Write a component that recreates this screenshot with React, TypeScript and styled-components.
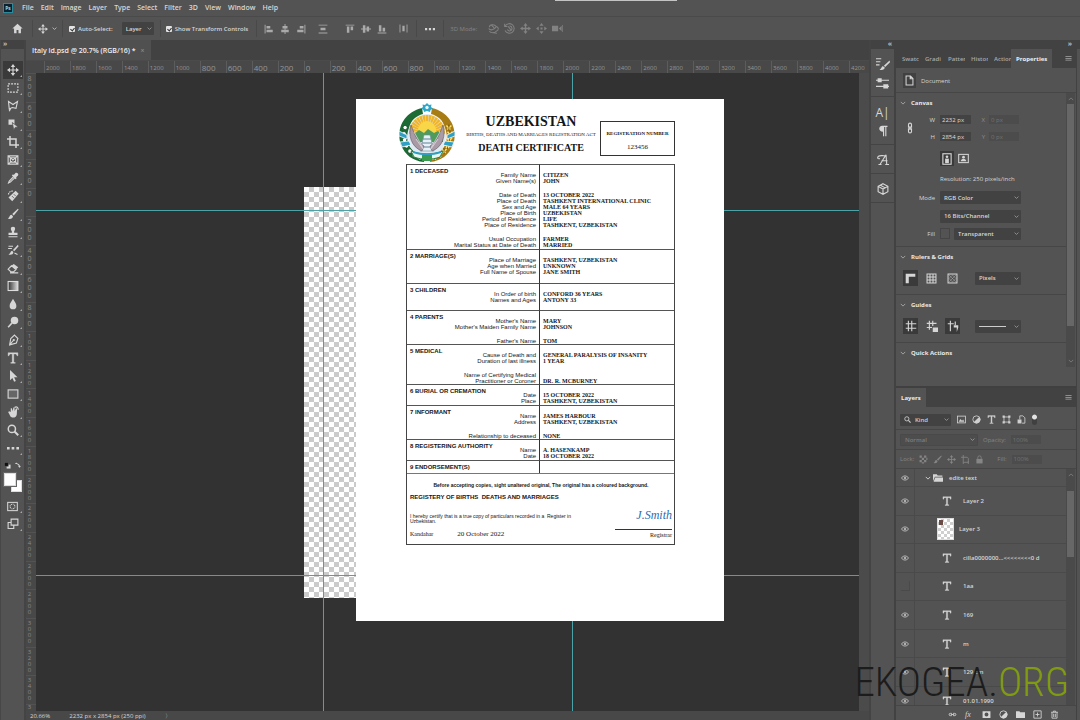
import React from "react";
import styled, { createGlobalStyle, css } from "styled-components";

const Global = createGlobalStyle`
  * { box-sizing: border-box; }
  body { margin: 0; background: #323232; font-family: "Open Sans", "Noto Sans", sans-serif; font-size: 7px; color: #d6d6d6; }
  button, input, select { font: inherit; color: inherit; }
  h1, h2, h3, p { margin: 0; }
`;

const bar = "#535353";
const dark = "#424242";
const line = "#464646";
const serif = '"Liberation Serif", serif';
const sans = '"Liberation Sans", sans-serif';

/* ---------- icons ---------- */

const s = { fill: "none", stroke: "currentColor", strokeWidth: 1.5 } as const;

const glyphs: Record<string, React.ReactNode> = {
  home: <path d="M8 1 0.5 8H3v7h3.6v-5h2.8v5H13V8h2.5z" />,
  move: (
    <>
      <path d="M8 0 5 4h6zM8 16l-3-4h6zM0 8l4-3v6zM16 8l-4-3v6z" />
      <path d="M8 3v10M3 8h10" {...s} />
    </>
  ),
  pan: <path d="M8 0 5 4h2v3H4V5L0 8l4 3V9h3v3H5l3 4 3-4H9V9h3v2l4-3-4-3v2H9V4h2z" />,
  slide: <path d="M8 0 5 4h6zM8 16l-3-4h6zM0 8l4-3v6zM16 8l-4-3v6zM6.500 6.500h3v3h-3z" />,
  marquee: <rect x="1.5" y="2.5" width="13" height="11" {...s} strokeDasharray="2.6 1.4" />,
  lasso: <path d="M2 2 8 6l6-4-2 9-5-1-4 2zM5 11l-2 4" {...s} />,
  objsel: (
    <>
      <path d="M2 2h8v7H2z" />
      <path d="M7 6l8 6-4 .5L9 16z" stroke="#535353" />
    </>
  ),
  crop: <path d="M4 0v12h12M0 4h12v12" {...s} strokeWidth={2} />,
  frame: <path d="M1.5 2.5h13v11h-13zM1.5 2.5l13 11M14.500 2.500l-13 11M4.500 5h7v6h-7z" {...s} />,
  pipette: (
    <>
      <path d="M9 4l2-2.500c2-2 5.500 1 3.500 3.500L12 7l1 1-1.500 1.500-5-5L8 3z" />
      <path d="M9 6l-6 6-1 2.500L4.500 13.500l6-6" {...s} />
    </>
  ),
  heal: (
    <>
      <path d="M11.500 1 15.500 5 7 15 2 10z" />
      <path d="M2 6c0-3 3-5 6-4.500" {...s} strokeDasharray="2 1" />
      <path d="M6.500 8l3 3M9 5.500l2.500 2.500" stroke="#535353" />
    </>
  ),
  brush: (
    <>
      <path d="M14.500 1 7 8l2 2 6.500-8z" />
      <path d="M6 9c-3 0-2 4-5 5 3 1.500 7 0 7-3z" />
    </>
  ),
  stamp: <path d="M8 1C4 1 5 5 6.500 7v2H2v3h12V9H9.500V7C11 5 12 1 8 1zM2 13.500h12V15H2z" />,
  history: (
    <>
      <path d="M14.500 1 8 8l1.500 1.500L15.500 3zM7 9c-2.500 0-2 4-5 5 3 1 6.500 0 6.500-3z" />
      <path d="M2 3h6M1.500 6h5M10 12l4 2" {...s} />
    </>
  ),
  eraser: (
    <>
      <path d="M9 2.500 15 7l-3 3-6-5z" />
      <path d="M6 5l-4.500 4.500L5 13h4l3-3zM4 14.500h11" {...s} />
    </>
  ),
  drop: <path d="M8 1C6 5 3.500 7 3.500 10.500a4.500 4.500 0 0 0 9 0C12.500 7 10 5 8 1z" />,
  dodge: (
    <>
      <circle cx="10" cy="6" r="5" />
      <path d="M6.500 9.500 1.500 15" {...s} strokeWidth={2} />
    </>
  ),
  pen: (
    <>
      <path d="M10 1.500l4.500 4.500-2 6-9 2.500L5 6zM3.500 14.500 8 9" {...s} />
      <circle cx="9" cy="8" r="1.500" />
    </>
  ),
  type: <path d="M1.500 1h13v4h-1.200c-.2-1.800-.8-2.400-2.600-2.400H9v10.200c0 1 .4 1.200 2 1.300V15H5v-.9c1.600-.1 2-.3 2-1.300V2.600H5.300c-1.800 0-2.400.6-2.600 2.400H1.500z" stroke="currentColor" strokeWidth=".5" />,
  arrow: <path d="M4 0v13.500l3.200-3 2.300 5 2.300-1-2.300-5H14z" />,
  rect: <rect x="1.500" y="2.500" width="13" height="11" {...s} fill="#666" />,
  hand: (
    <>
      <path d="M3 7l2 1 0-5 1.500 0 1 4L8.500 2l1.500 0 .3 5L12 3l1.500.5-.500 8c-1 5-8 5-9 1L1.500 8z" />
      <path d="M10 2c3-2 5 0 5 3" {...s} />
    </>
  ),
  zoom: (
    <>
      <circle cx="6.500" cy="6.500" r="4.800" {...s} strokeWidth={2} />
      <path d="M10 10l5 5" {...s} strokeWidth={2.5} />
    </>
  ),
  dots: <path d="M0 6.500h3.500V10H0zM6.200 6.500h3.500V10H6.200zM12.500 6.500H16V10h-3.500z" />,
  mask: (
    <>
      <rect x="1" y="2" width="14" height="12" {...s} />
      <circle cx="8" cy="8" r="3.500" {...s} strokeDasharray="1.500 1" />
    </>
  ),
  mini: (
    <>
      <path d="M6 6h9v9H6z" />
      <path d="M1 1h9v9H1z" fill="#111" stroke="#777" />
    </>
  ),
  screen: <path d="M5.500 1.500h9v8h-9zM9 9.500v4.500H1.500V6h4" {...s} />,
  alignL: <path d="M1 1h1.500v14H1zM4 3h6v4H4zM4 9h10v4H4z" />,
  alignC: <path d="M7.300 0h1.500v16H7.300zM4 3h8v4H4zM2 9h12v4H2z" />,
  alignR: <path d="M13.500 1H15v14h-1.500zM6 3h6v4H6zM2 9h10v4H2z" />,
  distV: <path d="M1 1h14v1.500H1zM1 13.500h14V15H1zM4 6h8v4H4z" />,
  alignT: <path d="M1 1h14v1.500H1zM3 4h4v10H3zM9 4h4v6H9z" />,
  alignM: <path d="M0 7.300h16v1.500H0zM3 2h4v12H3zM9 4h4v8H9z" />,
  alignB: <path d="M1 13.500h14V15H1zM3 2h4v10H3zM9 6h4v6H9z" />,
  distH: <path d="M1 1h1.500v14H1zM13.500 1H15v14h-1.500zM6 3h4v10H6z" />,
  orbit: <path d="M2 6c0-4 7-5 10-1 4 1 4 6 0 7-2 3-8 3-10 0M1 8c2 3 8 3 11-3M5 3l4 4M8 14l5 1" {...s} />,
  roll: <path d="M1 1v4h4M2 4a7 7 0 1 1-.5 7M8 4.500a3.500 3.500 0 1 1-3 5M6 5l5 6" {...s} />,
  camera: <path d="M0 4h9v8H0zM10 8l4-4v8zM15 3h1v10h-1z" />,
  brushes: (
    <>
      <path d="M15.500 4 9 10l1.500 1.500L16 6zM8 10.500c-2 0-1.500 3-4 4 3 1 6 0 6-2.500z" />
      <path d="M0 2h6M0 5.500h5M0 9h4" {...s} strokeWidth={1.2} />
    </>
  ),
  sliders: (
    <>
      <path d="M0 4h16M0 11.500h16" {...s} />
      <path d="M2 1.500h5v5H2zM9 9h6v5H9z" />
    </>
  ),
  para: <path d="M7 1h7v1.500h-1.500V15H11V2.500H9.500V15H8V9C1.500 9 1.500 1 7 1z" />,
  cube: <path d="M8 1l6.500 3.500v7L8 15l-6.500-3.500v-7zM1.500 4.500 8 8l6.500-3.500M8 8v7M4.500 3l6.500 3.500" {...s} />,
  doc: <path d="M3 1.500h6.500L13 5v9.500H3zM9 1.500V5.500h4" {...s} />,
  link: <path d="M6 7V3.500a2 2 0 0 1 4 0V7zM6 9v3.500a2 2 0 0 0 4 0V9zM8 5.500v5" {...s} />,
  linkH: <path d="M7 6H4a2 2 0 0 0 0 4h3M9 6h3a2 2 0 0 1 0 4H9M5 8h6" {...s} />,
  portrait: (
    <>
      <rect x="2.500" y="1" width="11" height="14" {...s} />
      <circle cx="8" cy="5" r="1.800" />
      <path d="M5.500 7.500h5v6h-5z" />
    </>
  ),
  landscape: (
    <>
      <rect x="1" y="2" width="14" height="12" {...s} />
      <circle cx="8" cy="6" r="2" />
      <path d="M4 12c0-5 8-5 8 0z" />
    </>
  ),
  ruler: <path d="M1 1h14v4.500H5.500V15H1z" />,
  grid: <path d="M1.500 1.500h13v13h-13zM5.800 1.500v13M10.200 1.500v13M1.500 5.800h13M1.500 10.200h13" {...s} />,
  pixgrid: (
    <>
      <rect x="1.500" y="1.500" width="13" height="13" {...s} />
      <path d="M3 3l10 10M13 3 3 13M8 3l5 5-5 5-5-5z" {...s} strokeWidth={1} strokeDasharray="1 1" />
    </>
  ),
  guides: <path d="M4.500 1v14M9 1v14M1 5h14M1 11h14" {...s} />,
  guideLock: (
    <>
      <path d="M4.500 1v12M9 1v7M1 4.500h13M1 10h7" {...s} />
      <path d="M9 10h7v6H9z" />
    </>
  ),
  smart: (
    <>
      <path d="M4.500 1v14M1 5h8M11 2v5" {...s} />
      <path d="M9 7h6v3l-2 6V10H9z" />
    </>
  ),
  image: (
    <>
      <rect x="1" y="2" width="14" height="12" {...s} />
      <path d="M3 12l3-5 3 3 2-2 2 4z" />
    </>
  ),
  adjust: (
    <>
      <circle cx="8" cy="8" r="6.500" {...s} />
      <path d="M12.600 3.400a6.500 6.500 0 0 1-9.200 9.200z" />
    </>
  ),
  shape: (
    <>
      <rect x="3.500" y="3.500" width="9" height="9" {...s} />
      <path d="M1 1h4v4H1zM11 1h4v4h-4zM1 11h4v4H1zM11 11h4v4h-4z" />
    </>
  ),
  smartobj: (
    <>
      <path d="M5 8V1.500h5.500L14 5v9.500H9" {...s} />
      <path d="M1 8h7v7H1z" />
    </>
  ),
  checker: <path d="M1 1h4v4H1zM9 1h4v4H9zM5 5h4v4H5zM1 9h4v4H1zM9 9h4v4H9zM13 5h2v4h-2zM5 13h4v2H5z" />,
  artboard: <path d="M4 0v16M0 4h11l2 2v7H4M13 11v5" {...s} />,
  lock: (
    <>
      <path d="M2.500 7h11v8h-11z" />
      <path d="M5 7V4.500a3 3 0 0 1 6 0V7" {...s} />
    </>
  ),
  eye: (
    <>
      <path d="M1 8c3-5.500 11-5.500 14 0-3 5.500-11 5.500-14 0z" {...s} strokeWidth={2} />
      <circle cx="8" cy="8" r="2.500" />
    </>
  ),
  folder: <path d="M0 2h6l1.500 2H15v2H3L0 13zM3.500 7H16v7H1z" />,
  folderSolid: <path d="M0 2h6l1.500 2H16v10H0z" />,
  maskSolid: <path fillRule="evenodd" d="M1 2h14v12H1zM8 4.500a3.500 3.500 0 1 0 0 7 3.500 3.500 0 0 0 0-7z" />,
  add: <path d="M1.500 1.500h13v13h-13zM8 4.500v7M4.500 8h7" {...s} />,
  trash: <path d="M2 4h12M6 4V2h4v2M3.500 4v10.500h9V4M6.500 6.500v6M9.500 6.500v6" {...s} />,
  swap: <path d="M3 1 0 5h2.500c0 0 6 0 8 6H8l4 4 4-4h-2.500C12 5 6 3 5.500 3z" />,
  menu: <path d="M1 3h14v1.500H1zM1 7h14v1.500H1zM1 11h14v1.500H1z" />,
  glyphA: (
    <>
      <path d="M2 3c3-2 6 0 10-1M12 1 4 14M12 1l1 13M6 9h8M2 14h4M11 14h5M4 6c-3 1-4-1-2-3" {...s} />
    </>
  ),
  gradient: (
    <>
      <defs>
        <linearGradient id="grad"><stop stopColor="#333" /><stop offset="1" stopColor="#ddd" /></linearGradient>
      </defs>
      <rect x="1.500" y="2" width="13" height="12" fill="url(#grad)" stroke="#ddd" strokeWidth="1.500" />
    </>
  ),
};

const Svg = styled.svg`
  display: block;
  flex: none;
  fill: currentColor;
`;

function Icon({ name, size = 10 }: { name: string; size?: number }) {
  return (
    <Svg viewBox="0 0 16 16" width={size} height={size} aria-hidden="true">
      {glyphs[name]}
    </Svg>
  );
}

const Chevron = ({ size = 6 }: { size?: number }) => (
  <Svg viewBox="0 0 8 8" width={size} height={size} aria-hidden="true">
    <path d="M1 2.500 4 5.500 7 2.500" fill="none" stroke="currentColor" strokeWidth="1.200" />
  </Svg>
);

/* ---------- shell ---------- */

const Shell = styled.div`
  height: 100vh;
  display: flex;
  flex-direction: column;
  overflow: hidden;
  position: relative;
`;

const MenuBar = styled.nav`
  height: 17px;
  display: flex;
  align-items: center;
  gap: 7px;
  padding-left: 3px;
  background: ${bar};
  border-bottom: 1px solid #4a4a4a;
`;

const Logo = styled.span`
  width: 10px;
  height: 10px;
  margin-right: 2px;
  border: 1px solid #2b8a9c;
  background: #0b2231;
  color: #9fd8ee;
  font: 700 5px/8px "Open Sans", sans-serif;
  text-align: center;
`;

const MenuItem = styled.button`
  border: 0;
  padding: 0;
  background: none;
  font-weight: 600;
  line-height: 16px;
`;

const TopHandle = styled.div`
  position: absolute;
  top: 0;
  left: 555px;
  width: 122px;
  height: 1px;
  background: #c4c4c4;
`;

const Options = styled.div`
  height: 23px;
  display: flex;
  align-items: center;
  background: ${bar};
  padding-left: 12px;
`;

const Group = styled.div<{ $gap?: number; $ml?: number; $tone?: string }>`
  display: flex;
  align-items: center;
  gap: ${(p) => p.$gap ?? 4}px;
  margin-left: ${(p) => p.$ml ?? 0}px;
  white-space: nowrap;
  ${(p) => p.$tone && css`color: ${p.$tone};`}
`;

const ModeText = styled.span`
  margin-right: 5px;
  font-size: 6px;
  color: #858585;
`;

const Rule = styled.span<{ $ml?: number }>`
  width: 1px;
  height: 17px;
  margin-left: ${(p) => p.$ml ?? 9}px;
  background: #494949;
`;

const Tick = styled.label`
  display: flex;
  align-items: center;
  gap: 3px;
  font-size: 6px;
  font-weight: 600;
  white-space: nowrap;
  input {
    appearance: none;
    position: relative;
    width: 6px;
    height: 6px;
    margin: 0;
    border-radius: 1px;
    background: #e4e4e4;
  }
  input:checked::after {
    content: "";
    position: absolute;
    left: 2px;
    top: 1px;
    width: 2px;
    height: 3px;
    border: solid #333;
    border-width: 0 1px 1px 0;
    transform: rotate(40deg);
  }
`;

const Drop = styled.span<{ $w: number; $h?: number; $dim?: boolean }>`
  display: flex;
  align-items: center;
  position: relative;
  flex: none;
  width: ${(p) => p.$w}px;
  height: ${(p) => p.$h ?? 12}px;
  border-radius: 1px;
  background: ${(p) => (p.$dim ? "#4d4d4d" : dark)};
  ${(p) => p.$dim && css`color: #7d7d7d; border: 1px solid #494949;`}
  select {
    appearance: none;
    flex: 1;
    min-width: 0;
    height: 100%;
    border: 0;
    background: none;
    padding: 0 8px 0 4px;
    font-size: 6px;
    font-weight: 600;
  }
  > svg:last-child {
    position: absolute;
    right: 2px;
    color: #aaa;
  }
`;

const IconBtn = styled.button<{ $on?: boolean; $w?: number; $h?: number }>`
  display: flex;
  align-items: center;
  justify-content: center;
  flex: none;
  width: ${(p) => p.$w ?? 10}px;
  height: ${(p) => p.$h ?? 10}px;
  border: 0;
  padding: 0;
  background: ${(p) => (p.$on ? "#3a3a3a" : "none")};
`;

const Work = styled.div`
  flex: 1;
  min-height: 0;
  display: flex;
  background: ${bar};
`;

/* ---------- left tools ---------- */

const Tools = styled.aside`
  width: 26px;
  display: flex;
  flex-direction: column;
  background: ${bar};
  border-right: 2px solid #444;
  border-left: 1px solid #474747;
`;

const Collapse = styled.div<{ $right?: boolean; $pad?: number }>`
  height: 9px;
  flex: none;
  padding: 0 ${(p) => p.$pad ?? 2}px;
  background: ${dark};
  color: #bdbdbd;
  font-size: 7px;
  line-height: 7px;
  font-weight: 700;
  text-align: ${(p) => (p.$right ? "right" : "left")};
`;

const ToolList = styled.div`
  display: flex;
  flex-direction: column;
  align-items: center;
  padding-top: 12px;
`;

const Tool = styled(IconBtn)`
  position: relative;
  width: 20px;
  height: 18px;
  &::after {
    content: "";
    position: absolute;
    right: 1px;
    bottom: 2px;
    border: 1px solid;
    border-color: transparent #aaa #aaa transparent;
  }
`;

const SwatchKeys = styled.div`
  display: flex;
  gap: 4px;
  padding-top: 5px;
`;

const Swatches = styled.div`
  display: grid;
  grid-template-columns: 12px 6px;
  grid-template-rows: 13px 6px;
  margin: 4px 0 5px;
  i { background: #fff; border: 1px solid #ddd; }
  i:last-child { grid-area: 1 / 1 / 3 / 3; margin: 7px 0 0 7px; }
  i:first-child { grid-area: 1 / 1; z-index: 1; box-shadow: 0 0 0 1px #666; }
`;

/* ---------- document ---------- */

const Document = styled.main`
  flex: 1;
  min-width: 0;
  display: flex;
  flex-direction: column;
`;

const TabStrip = styled.div`
  height: 21px;
  display: flex;
  background: ${dark};
  border-bottom: 1px solid #4b4b4b;
`;

const DocTab = styled.button`
  display: flex;
  align-items: center;
  gap: 5px;
  padding: 0 6px;
  border: 0;
  background: #505050;
  color: #eee;
  font-weight: 600;
  span { color: #888; }
`;

const Sheet = styled.div`
  flex: 1;
  min-height: 0;
  display: grid;
  grid-template: 12px 1fr 9px / 10px 1fr 10px;
`;

const Corner = styled.div`
  background: #484848;
`;

const RulerH = styled.div`
  grid-column: 2 / 4;
  display: grid;
  grid-template-columns: repeat(31, 1fr) 20px;
  padding-left: 8px;
  background: #484848;
  color: #969696;
  overflow: hidden;
  span { border-left: 1px solid #5c5c5c; line-height: 14px; padding-left: 1px; font-size: 6px; }
  span.big { font-size: 8px; }
`;

const RulerV = styled.div`
  display: grid;
  grid-template-rows: repeat(22, 1fr) 7px;
  min-height: 0;
  background: #484848;
  color: #8a8a8a;
  overflow: hidden;
`;

const VLabel = styled.span<{ $long: boolean }>`
  min-height: 0;
  display: flex;
  flex-direction: column;
  align-items: center;
  padding: 1px 3px 0 0;
  border-top: 1px solid #535353;
  font-size: ${(p) => (p.$long ? 6 : 7)}px;
  line-height: ${(p) => (p.$long ? 6 : 8)}px;
  &:last-child { padding-top: 0; line-height: 5px; }
`;

const Canvas = styled.div`
  position: relative;
  background: #323232;
  overflow: hidden;
`;

const Artboard = styled.div`
  position: absolute;
  left: 268px;
  top: 114px;
  width: 290px;
  height: 411px;
  background: repeating-conic-gradient(#cbcbcb 0 25%, #fff 0 50%) 0 0 / 10px 10px;
`;

const Guide = styled.div<{ $x?: number; $y?: number }>`
  position: absolute;
  background: #4ba3a8;
  ${(p) =>
    p.$x !== undefined
      ? css`left: ${p.$x}px; top: 0; bottom: 0; width: 1px;`
      : css`top: ${p.$y}px; left: 0; right: 0; height: 1px;`}
`;

const Gutter = styled.div`
  background: #4b4b4b;
`;

const Status = styled.footer`
  grid-column: 1 / 4;
  display: flex;
  gap: 19px;
  padding-left: 4px;
  background: #484848;
  font-size: 6px;
  line-height: 11px;
  overflow: hidden;
  white-space: nowrap;
`;

/* ---------- certificate ---------- */

const Paper = styled.article`
  position: absolute;
  left: 320px;
  top: 26px;
  width: 368px;
  height: 522px;
  padding: 4px 49px 0 42px;
  background: #fff;
  color: #151515;
  font-family: ${sans};
`;

const Head = styled.header`
  display: flex;
  height: 61px;
`;

const Titles = styled.div`
  flex: 1;
  padding: 11px 0 0 6px;
  text-align: center;
  font-family: ${serif};
  white-space: nowrap;
  h1 { font-size: 14px; line-height: 16px; }
  p { font-size: 5px; line-height: 9px; }
  h2 { font-size: 10px; line-height: 17px; }
`;

const RegBox = styled.div`
  width: 75px;
  height: 35px;
  margin-top: 18px;
  border: 1px solid #333;
  text-align: center;
  font: 700 5px/7px ${serif};
  padding-top: 8px;
  white-space: nowrap;
  p { margin-top: 6px; font-size: 7px; line-height: 8px; font-weight: 400; }
`;

const Frame = styled.div`
  margin-left: 8px;
  border: 1px solid #444;
  border-top: 0;
`;

const Records = styled.table`
  width: 100%;
  table-layout: fixed;
  border-collapse: separate;
  border-spacing: 0;
  border-bottom: 1px solid #777;
  td, th { padding: 0; vertical-align: top; border-top: 1px solid #555; font-weight: 400; }
  th { width: 132px; }
  td { border-left: 1px solid #333; }
`;

const Section = styled.tr<{ $h: number }>`
  height: ${(p) => p.$h}px;
`;

const Left = styled.div`
  display: grid;
  > * { grid-area: 1 / 1; }
`;

const SecTitle = styled.h3`
  padding: 2px 0 0 3px;
  text-align: left;
  font-size: 6px;
  line-height: 9px;
`;

const Lines = styled.div<{ $value?: boolean }>`
  padding: 7px 3px 0;
  text-align: ${(p) => (p.$value ? "left" : "right")};
  font: ${(p) => (p.$value ? `700 6px/6px ${serif}` : `400 6px/6px ${sans}`)};
  white-space: nowrap;
`;

const Line = styled.div`
  height: 6px;
  &:empty { height: 8px; }
`;

const Foot = styled.div`
  height: 70px;
  padding: 8px 2px 0 3px;
  font-size: 5px;
  line-height: 6px;
`;

const Notice = styled.p`
  text-align: center;
  font-weight: 700;
`;

const Registry = styled.h3`
  margin-top: 5px;
  font-size: 6px;
  line-height: 8px;
  white-space: pre;
`;

const Sign = styled.div`
  display: flex;
  justify-content: space-between;
  padding-top: 10px;
`;

const Certify = styled.div`
  width: 164px;
  line-height: 5px;
  padding-top: 3px;
`;

const Dated = styled.div`
  display: flex;
  gap: 24px;
  margin-top: 6px;
  font: 6px/8px ${serif};
  span:last-child { font-size: 7px; }
`;

const Signer = styled.div`
  width: 57px;
  text-align: right;
  font: 6px/11px ${serif};
  em {
    display: block;
    height: 19px;
    border-bottom: 1px solid #333;
    color: #2b6cb0;
    font: italic 12px/9px "Z003", "URW Chancery L", ${serif};
  }
`;

type Sec = { title: string; h: number; rows: [string, string][] };

const sections: Sec[] = [
  {
    title: "1 DECEASED", h: 85, rows: [
      ["Family Name", "CITIZEN"], ["Given Name(s)", "JOHN"], ["", ""],
      ["Date of Death", "13 OCTOBER 2022"], ["Place of Death", "TASHKENT INTERNATIONAL CLINIC"],
      ["Sex and Age", "MALE 64 YEARS"], ["Place of Birth", "UZBEKISTAN"],
      ["Period of Residence", "LIFE"], ["Place of Residence", "TASHKENT, UZBEKISTAN"], ["", ""],
      ["Usual Occupation", "FARMER"], ["Marital Status at Date of Death", "MARRIED"],
    ],
  },
  { title: "2 MARRIAGE(S)", h: 34, rows: [["Place of Marriage", "TASHKENT, UZBEKISTAN"], ["Age when Married", "UNKNOWN"], ["Full Name of Spouse", "JANE SMITH"]] },
  { title: "3 CHILDREN", h: 27, rows: [["In Order of birth", "CONFORD 36 YEARS"], ["Names and Ages", "ANTONY 33"]] },
  { title: "4 PARENTS", h: 34, rows: [["Mother's Name", "MARY"], ["Mother's Maiden Family Name", "JOHNSON"], ["", ""], ["Father's Name", "TOM"]] },
  { title: "5 MEDICAL", h: 40, rows: [["Cause of Death and", "GENERAL PARALYSIS OF INSANITY"], ["Duration of last illness", "1 YEAR"], ["", ""], ["Name of Certifying Medical", "\u00a0"], ["Practitioner or Coroner", "DR. R. MCBURNEY"]] },
  { title: "6 BURIAL OR CREMATION", h: 21, rows: [["Date", "15 OCTOBER 2022"], ["Place", "TASHKENT, UZBEKISTAN"]] },
  { title: "7 INFORMANT", h: 34, rows: [["Name", "JAMES HARBOUR"], ["Address", "TASHKENT, UZBEKISTAN"], ["", ""], ["Relationship to deceased", "NONE"]] },
  { title: "8 REGISTERING AUTHORITY", h: 21, rows: [["Name", "A. HASENKAMP"], ["Date", "18 OCTOBER 2022"]] },
  { title: "9 ENDORSEMENT(S)", h: 13, rows: [] },
];

function Emblem() {
  const steps = [0, 1, 2, 3, 4, 5, 6];
  return (
    <Svg viewBox="0 0 58 60" width="58" height="60" aria-label="Emblem">
      <ellipse cx="29" cy="33" rx="19" ry="22" fill="#dfeaf2" />
      {Array.from({ length: 17 }, (_, i) => (
        <path key={i} d="M29 30 27.500 12h3z" fill="#f0b429" transform={`rotate(${(i - 8) * 11} 29 30)`} />
      ))}
      <circle cx="29" cy="27" r="9" fill="#f9d648" />
      <path d="M14 33l7-6 5 3 4-4 6 4 4-2 5 5v6H14z" fill="#4f9a5d" />
      <path d="M26 32h6l4 16H22z" fill="#e7f1f7" stroke="#6c8a9c" strokeWidth=".6" />
      <path d="M25 36h8M24 40h10M23 44h12" stroke="#5f8296" />
      <path d="M13 22c-3 10 0 22 11 26l2-5c-6-4-9-10-13-21zM45 22c3 10 0 22-11 26l-2-5c6-4 9-10 13-21z" fill="#a99aa5" stroke="#5f5967" strokeWidth=".6" />
      <path d="M16 29l9 16M18 36l7 10M42 29l-9 16M40 36l-7 10" stroke="#e8e4ea" strokeWidth=".7" />
      <path d="M24 5C4 10-2 28 3 42c4 10 12 16 23 17l1-6C12 51 6 38 11 25c2-8 7-12 14-14z" fill="#1c6b34" />
      <path d="M34 5c20 5 26 23 21 37-4 10-12 16-23 17l-1-6c15-2 21-15 16-28-2-8-7-12-14-14z" fill="#a87c14" />
      {steps.map((i) => {
        const a = (Math.PI * (222 - i * 15)) / 180 + Math.PI / 6;
        const x = 29 + 23 * Math.cos(a);
        const y = 32 - 24 * Math.sin(a);
        return (
          <g key={i}>
            <circle cx={x} cy={y} r="2.200" fill="#fff" stroke="#0d4d22" strokeWidth=".8" />
            <path d={`M${58 - x - 2.5} ${y - 2}l4 4M${58 - x + 2.5} ${y - 2}l-4 4`} stroke="#ffe06a" strokeWidth="1.500" />
            <path d={`M${58 - x} ${y - 3}v6`} stroke="#5e4609" strokeWidth=".7" />
          </g>
        );
      })}
      <path d="M1 28l8 4v4l-8-3zM2 39l9-1 2 4-9 2zM57 28l-8 4v4l8-3zM56 39l-9-1-2 4 9 2z" fill="#2f9fc4" stroke="#fff" strokeWidth=".8" />
      <path d="M13 48c10 4 22 4 32 0l-3 6c-8 3-18 3-26 0z" fill="#e9f5ee" stroke="#27834a" />
      <path d="M15 48c9 3 19 3 28 0v2c-9 3-19 3-28 0z" fill="#2f9fc4" />
      <path d="M24 52h10v6H24z" fill="#3a9b50" />
      <path d="M29 0l2 2 2.500-.5-.5 2.500 2 1.500-2.500 1.500-.500 2-3-1-3 1-.5-2L23 5.500 25 4l-.5-2.500L27 2z" fill="#2da6c9" />
      <circle cx="29" cy="4.500" r="1.700" fill="#e9f8fc" />
    </Svg>
  );
}

function Certificate() {
  return (
    <Paper>
      <Head>
        <Emblem />
        <Titles>
          <h1>UZBEKISTAN</h1>
          <p>BIRTHS, DEATHS AND MARRIAGES REGISTRATION ACT</p>
          <h2>DEATH CERTIFICATE</h2>
        </Titles>
        <RegBox>
          REGISTRATION NUMBER
          <p>123456</p>
        </RegBox>
      </Head>
      <Frame>
        <Records>
          <tbody>
            {sections.map((sec) => (
              <Section key={sec.title} $h={sec.h}>
                <th scope="row">
                  <Left>
                    <SecTitle>{sec.title}</SecTitle>
                    <Lines>{sec.rows.map((r, i) => <Line key={i}>{r[0]}</Line>)}</Lines>
                  </Left>
                </th>
                <td>
                  <Lines $value>{sec.rows.map((r, i) => <Line key={i}>{r[1]}</Line>)}</Lines>
                </td>
              </Section>
            ))}
          </tbody>
        </Records>
        <Foot>
          <Notice>Before accepting copies, sight unaltered original, The original has a coloured background.</Notice>
          <Registry>{"REGISTERY OF BIRTHS  DEATHS AND MARRIAGES"}</Registry>
          <Sign>
            <Certify>
              I hereby certify that is a true copy of particulars recorded in a&nbsp; Register in Uzbekistan.
              <Dated><span>Kandahar</span><span>20 October 2022</span></Dated>
            </Certify>
            <Signer><em>J.Smith</em>Registrar</Signer>
          </Sign>
        </Foot>
      </Frame>
    </Paper>
  );
}

/* ---------- right side ---------- */

const Dock = styled.aside`
  width: 211px;
  display: flex;
  flex-direction: column;
  background: ${bar};
  border-left: 2px solid #444;
`;

const DockTop = styled.div`
  display: grid;
  grid-template-columns: 25px 1fr;
  background: ${dark};
`;

const DockBody = styled.div`
  flex: 1;
  min-height: 0;
  display: flex;
`;

const Rail = styled.div`
  width: 25px;
  border-right: 2px solid ${dark};
`;

const RailGroup = styled.div`
  display: flex;
  flex-direction: column;
  align-items: center;
  gap: 5px;
  padding: 8px 0 6px;
  border-bottom: 1px solid #444;
  font-size: 12px;
  button { height: 14px; width: 18px; }
`;

const Panels = styled.div`
  flex: 1;
  min-width: 0;
  display: flex;
  flex-direction: column;
  border-right: 1px solid ${dark};
  margin-right: 3px;
`;

const Tabs = styled.div`
  height: 19px;
  flex: none;
  display: flex;
  align-items: center;
  gap: 6px;
  padding: 0 4px 0 6px;
  background: ${dark};
  color: #a8a8a8;
  font-size: 6px;
  > svg { margin-left: auto; }
`;

const Tab = styled.button<{ $on?: boolean }>`
  height: 19px;
  width: ${(p) => (p.$on ? "auto" : "17px")};
  border: 0;
  padding: 0;
  background: none;
  overflow: hidden;
  text-align: left;
  white-space: nowrap;
  font-weight: 600;
  ${(p) =>
    p.$on &&
    css`
      margin-left: -6px;
      padding: 0 5px;
      background: ${bar};
      color: #eee;
      font-weight: 700;
    `}
`;

const Scroller = styled.div`
  flex: 1;
  min-height: 0;
  display: flex;
`;

const Fill = styled.div`
  flex: 1;
  min-width: 0;
`;

const Track = styled.div<{ $h?: number; $thumb: number; $gap: number }>`
  width: 9px;
  margin-right: 1px;
  height: ${(p) => (p.$h ? `${p.$h}px` : "100%")};
  display: flex;
  flex-direction: column;
  align-items: center;
  background: #4a4a4a;
  color: #7d7d7d;
  i { width: 7px; height: ${(p) => p.$thumb}px; margin-top: ${(p) => p.$gap}px; background: #676767; }
  svg:first-child { margin-top: 3px; transform: scaleY(-1); }
  svg:last-child { margin-top: auto; margin-bottom: 3px; }
`;

const DocRow = styled.div`
  height: 25px;
  flex: none;
  display: flex;
  align-items: center;
  gap: 5px;
  padding: 1px 0 0 7px;
  border-bottom: 1px solid ${line};
  font-size: 6px;
  span { display: flex; align-items: center; justify-content: center; width: 13px; height: 15px; background: #414141; }
`;

const Block = styled.section<{ $h: number }>`
  height: ${(p) => p.$h}px;
  border-bottom: 1px solid ${line};
  &:last-child { border-bottom: 0; }
`;

const BlockTitle = styled.h2`
  display: flex;
  align-items: center;
  gap: 5px;
  height: 20px;
  padding-left: 4px;
  font-size: 6px;
  font-weight: 700;
  color: #e8e8e8;
  svg { color: #aaa; }
`;

const Props = styled.div`
  display: grid;
  grid-template-columns: 20px 14px 81px;
  column-gap: 5px;
  grid-template-rows: 17px 17px 27px 14px 23px 14px 21px;
  align-items: center;
  margin-top: -2px;
  font-size: 6px;
  > svg { grid-area: 1 / 1 / 3 / 2; justify-self: end; }
`;

const Cell = styled.div<{ $row: number }>`
  grid-area: ${(p) => p.$row} / 3;
  display: flex;
  align-items: center;
  gap: 4px;
  white-space: nowrap;
`;

const CellLabel = styled.label<{ $row: number }>`
  grid-area: ${(p) => p.$row} / 2;
  display: flex;
  justify-content: flex-end;
`;

const Field = styled.input<{ $dim?: boolean; $w?: number }>`
  width: ${(p) => p.$w ?? 31}px;
  height: 9px;
  flex: none;
  border: 0;
  padding: 0 2px;
  background: ${(p) => (p.$dim ? "#4c4c4c" : "#434343")};
  color: ${(p) => (p.$dim ? "#737373" : "#dedede")};
  font-size: 6px;
`;

const Axis = styled.label`
  width: 10px;
  text-align: right;
  color: #8b8b8b;
`;

const Swatch = styled.span`
  width: 10px;
  height: 11px;
  flex: none;
  border: 1px solid #454545;
`;

const ToolRow = styled.div`
  display: flex;
  align-items: center;
  gap: 6px;
  padding: 3px 0 0 7px;
  > span { margin-left: 9px; }
`;

const Stroke = styled.i`
  position: absolute;
  left: 4px;
  width: 27px;
  height: 1px;
  background: #ccc;
`;

const LayersPanel = styled.section`
  height: calc(100vh - 386px);
  display: flex;
  flex-direction: column;
  border-top: 2px solid #404040;
`;

const LayerBar = styled.div<{ $h: number; $dim?: boolean; $gap: number }>`
  height: ${(p) => p.$h}px;
  flex: none;
  display: flex;
  align-items: center;
  gap: ${(p) => p.$gap}px;
  padding: ${(p) => (p.$dim ? 0 : 3)}px 4px 0;
  border-bottom: 1px solid ${line};
  font-size: 6px;
  color: ${(p) => (p.$dim ? "#858585" : "#cfcfcf")};
`;

const Toggle = styled.span`
  width: 5px;
  height: 11px;
  border-radius: 3px;
  background: radial-gradient(circle at 50% 3px, #e2e2e2 2px, #404040 3px);
`;

const LayerList = styled.ul`
  flex: 1;
  min-width: 0;
  min-height: 0;
  margin: 0;
  padding: 0;
  list-style: none;
  display: grid;
  grid-template-rows: 18px repeat(7, 1fr) 18px;
  overflow: hidden;
`;

const Layer = styled.li<{ $kind: string }>`
  display: flex;
  align-items: center;
  min-height: 0;
  border-bottom: 1px solid #4a4a4a;
  font-size: 6px;
  font-weight: 600;
  white-space: nowrap;
  gap: ${(p) => (p.$kind === "type" ? 11 : p.$kind === "thumb" ? 5 : 6)}px;
  &:last-child { border: 0; height: 29px; }
`;

const EyeCell = styled.button`
  align-self: stretch;
  display: flex;
  align-items: center;
  justify-content: center;
  flex: none;
  width: 19px;
  border: 0;
  border-right: 1px solid #4a4a4a;
  padding: 0;
  background: none;
  color: #b0b0b0;
`;

const Blank = styled.span`
  width: 9px;
  height: 10px;
  border: solid #4a4a4a;
  border-width: 0 1px 1px 0;
`;

const Thumb = styled.span`
  width: 17px;
  height: 22px;
  margin-left: 17px;
  border: 1px solid #ddd;
  background: linear-gradient(#6a4b45, #6a4b45) 1px 1px / 4px 5px no-repeat,
    repeating-conic-gradient(#cfcfcf 0 25%, #fff 0 50%) 0 0 / 6px 6px;
`;

const Glyph = styled.span<{ $folder?: boolean }>`
  display: flex;
  align-items: center;
  gap: 2px;
  margin-left: ${(p) => (p.$folder ? 4 : 16)}px;
`;

const LayerFoot = styled.div`
  height: 15px;
  flex: none;
  display: flex;
  align-items: center;
  gap: 8px;
  padding: 2px 0 0 52px;
  border-top: 1px solid ${line};
  em { font: italic 8px/9px ${serif}; width: 9px; }
`;

const Watermark = styled.div`
  position: absolute;
  right: 11px;
  bottom: 7px;
  color: #1c1c1c;
  font: 300 41px/62px "Noto Sans ExtraCondensed Light", "Noto Sans ExtraCondensed", "Roboto Condensed Light", "Roboto Condensed", "Open Sans Condensed Light", "Open Sans Condensed", sans-serif;
  span { color: #809b12; }
`;

function Select({ id, label, value, w, h, dim }: { id?: string; label: string; value: string; w: number; h?: number; dim?: boolean }) {
  return (
    <Drop $w={w} $h={h} $dim={dim}>
      <select id={id} aria-label={label} defaultValue={value}><option>{value}</option></select>
      <Chevron size={5} />
    </Drop>
  );
}

const tools = ["move", "marquee", "lasso", "objsel", "crop", "frame", "pipette", "heal", "brush", "stamp", "history", "eraser", "gradient", "drop", "dodge", "pen", "type", "arrow", "rect", "hand", "zoom", "dots"];

const layers: { kind: string; name: string; hidden?: boolean }[] = [
  { kind: "folder", name: "edite text" },
  { kind: "type", name: "Layer 2" },
  { kind: "thumb", name: "Layer 3" },
  { kind: "type", name: "cilla0000000...<<<<<<<<0 d" },
  { kind: "type", name: "1aa", hidden: true },
  { kind: "type", name: "169" },
  { kind: "type", name: "m" },
  { kind: "type", name: "129 cm" },
  { kind: "type", name: "01.01.1990" },
];

export default function App() {
  const hLabels = Array.from({ length: 32 }, (_, i) => Math.abs(2000 - i * 200));
  const vLabels = Array.from({ length: 22 }, (_, i) => Math.abs(800 - i * 200));
  return (
    <Shell>
      <Global />
      <MenuBar>
        <Logo>Ps</Logo>
        {["File", "Edit", "Image", "Layer", "Type", "Select", "Filter", "3D", "View", "Window", "Help"].map((m) => (
          <MenuItem key={m}>{m}</MenuItem>
        ))}
      </MenuBar>
      <TopHandle />
      <Options>
        <Icon name="home" size={11} />
        <Rule />
        <Group $ml={5} $gap={4}><Icon name="move" size={10} /><Chevron size={5} /></Group>
        <Rule $ml={5} />
        <Group $ml={6} $gap={9}>
          <Tick><input type="checkbox" defaultChecked />Auto-Select:</Tick>
          <Select label="Layer" value="Layer" w={32} h={13} />
        </Group>
        <Rule $ml={6} />
        <Group $ml={5}><Tick><input type="checkbox" defaultChecked />Show Transform Controls</Tick></Group>
        <Rule $ml={8} />
        <Group $ml={7} $gap={6} $tone="#aaa">
          {["alignL", "alignC", "alignR"].map((n) => <IconBtn key={n} aria-label={n}><Icon name={n} /></IconBtn>)}
        </Group>
        <Group $ml={12} $tone="#aaa"><IconBtn aria-label="distribute"><Icon name="distV" /></IconBtn></Group>
        <Group $ml={17} $gap={6} $tone="#aaa">
          {["alignT", "alignM", "alignB"].map((n) => <IconBtn key={n} aria-label={n}><Icon name={n} /></IconBtn>)}
        </Group>
        <Group $ml={11} $tone="#aaa"><IconBtn aria-label="distribute horizontally"><Icon name="distH" size={9} /></IconBtn></Group>
        <Rule $ml={8} />
        <Group $ml={8}><IconBtn aria-label="more"><Icon name="dots" /></IconBtn></Group>
        <Rule $ml={8} />
        <Group $ml={6} $gap={6} $tone="#828282">
          <ModeText>3D Mode:</ModeText>
          {["orbit", "roll", "pan", "slide", "camera"].map((n) => <IconBtn key={n} aria-label={n}><Icon name={n} size={11} /></IconBtn>)}
        </Group>
      </Options>
      <Work>
        <Tools>
          <Collapse>»</Collapse>
          <ToolList>
            {tools.map((t, i) => (
              <Tool key={t} $on={i === 0} aria-label={t}><Icon name={t} size={12} /></Tool>
            ))}
            <SwatchKeys><Icon name="mini" size={7} /><Icon name="swap" size={6} /></SwatchKeys>
            <Swatches><i /><i /></Swatches>
            <Tool aria-label="quick mask"><Icon name="mask" size={11} /></Tool>
            <Tool aria-label="screen mode"><Icon name="screen" size={12} /></Tool>
          </ToolList>
        </Tools>
        <Document>
          <TabStrip>
            <DocTab>Italy id.psd @ 20.7% (RGB/16) *<span>×</span></DocTab>
          </TabStrip>
          <Sheet>
            <Corner />
            <RulerH>
              {hLabels.map((n, i) => <span key={i} className={n < 1000 ? "big" : ""}>{n}</span>)}
            </RulerH>
            <RulerV>
              {vLabels.map((n, i) => (
                <VLabel key={i} $long={n >= 1000}>
                  {String(n).split("").map((d, k) => <span key={k}>{d}</span>)}
                </VLabel>
              ))}
              <VLabel $long>3</VLabel>
            </RulerV>
            <Canvas>
              <Artboard />
              <Guide $x={287} />
              <Guide $x={536} />
              <Guide $y={137} />
              <Guide $y={502} />
              <Certificate />
            </Canvas>
            <Gutter />
            <Status><span>20.66%</span><span>2232 px x 2854 px (250 ppi)</span><span>〉</span></Status>
          </Sheet>
        </Document>
        <Dock>
          <DockTop><Collapse $right $pad={4}>«</Collapse><Collapse $right $pad={8}>»</Collapse></DockTop>
          <DockBody>
            <Rail>
              <RailGroup>
                <IconBtn aria-label="brushes"><Icon name="brushes" size={14} /></IconBtn>
                <IconBtn aria-label="brush settings"><Icon name="sliders" size={13} /></IconBtn>
              </RailGroup>
              <RailGroup>
                <IconBtn aria-label="character">A|</IconBtn>
                <IconBtn aria-label="paragraph"><Icon name="para" size={12} /></IconBtn>
              </RailGroup>
              <RailGroup><IconBtn aria-label="glyphs"><Icon name="glyphA" size={12} /></IconBtn></RailGroup>
              <RailGroup><IconBtn aria-label="3D"><Icon name="cube" size={12} /></IconBtn></RailGroup>
            </Rail>
            <Panels>
              <Tabs>
                {["Swatc", "Gradi", "Patter", "Histor", "Actior"].map((t) => <Tab key={t}>{t}</Tab>)}
                <Tab $on>Properties</Tab>
                <Icon name="menu" size={7} />
              </Tabs>
              <DocRow><span><Icon name="doc" size={11} /></span>Document</DocRow>
              <Scroller>
                <Fill>
                  <Block $h={154}>
                    <BlockTitle><Chevron />Canvas</BlockTitle>
                    <Props>
                      <Icon name="link" size={12} />
                      <CellLabel $row={1} htmlFor="w">W</CellLabel>
                      <Cell $row={1}><Field id="w" defaultValue="2232 px" /><Axis htmlFor="x">X</Axis><Field id="x" $dim $w={30} defaultValue="0 px" /></Cell>
                      <CellLabel $row={2} htmlFor="h">H</CellLabel>
                      <Cell $row={2}><Field id="h" defaultValue="2854 px" /><Axis htmlFor="y">Y</Axis><Field id="y" $dim $w={30} defaultValue="0 px" /></Cell>
                      <Cell $row={3}>
                        <IconBtn $on $w={14} $h={15} aria-label="portrait"><Icon name="portrait" size={12} /></IconBtn>
                        <IconBtn aria-label="landscape"><Icon name="landscape" size={11} /></IconBtn>
                      </Cell>
                      <Cell $row={4}>Resolution: 250 pixels/inch</Cell>
                      <CellLabel $row={5} htmlFor="mode">Mode</CellLabel>
                      <Cell $row={5}><Select id="mode" label="Mode" value="RGB Color" w={81} h={13} /></Cell>
                      <Cell $row={6}><Select label="Depth" value="16 Bits/Channel" w={81} h={13} /></Cell>
                      <CellLabel $row={7} htmlFor="fillc">Fill</CellLabel>
                      <Cell $row={7}><Swatch /><Select id="fillc" label="Fill" value="Transparent" w={67} /></Cell>
                    </Props>
                  </Block>
                  <Block $h={48}>
                    <BlockTitle><Chevron />Rulers &amp; Grids</BlockTitle>
                    <ToolRow>
                      <IconBtn $on $w={15} $h={16} aria-label="rulers"><Icon name="ruler" size={11} /></IconBtn>
                      <IconBtn $w={15} aria-label="grid"><Icon name="grid" size={11} /></IconBtn>
                      <IconBtn $w={15} aria-label="pixel grid"><Icon name="pixgrid" size={11} /></IconBtn>
                      <Select label="Units" value="Pixels" w={46} h={13} />
                    </ToolRow>
                  </Block>
                  <Block $h={48}>
                    <BlockTitle><Chevron />Guides</BlockTitle>
                    <ToolRow>
                      <IconBtn $on $w={15} $h={16} aria-label="guides"><Icon name="guides" size={12} /></IconBtn>
                      <IconBtn $w={15} aria-label="lock guides"><Icon name="guideLock" size={12} /></IconBtn>
                      <IconBtn $on $w={15} $h={16} aria-label="smart guides"><Icon name="smart" size={12} /></IconBtn>
                      <Drop $w={46} $h={13}><select aria-label="Guide style"><option /></select><Stroke /><Chevron size={5} /></Drop>
                    </ToolRow>
                  </Block>
                  <Block $h={42}><BlockTitle><Chevron />Quick Actions</BlockTitle></Block>
                </Fill>
                <Track $h={274} $gap={2} $thumb={222}><Chevron /><i /><Chevron /></Track>
              </Scroller>
              <LayersPanel>
                <Tabs><Tab $on>Layers</Tab><Icon name="menu" size={7} /></Tabs>
                <LayerBar $h={23} $gap={6}>
                  <Drop $w={51} $h={12}>
                    <Group $ml={4}><Icon name="zoom" size={7} /></Group>
                    <select aria-label="Filter"><option>Kind</option></select>
                    <Chevron size={5} />
                  </Drop>
                  {["image", "adjust", "type", "shape", "smartobj"].map((n) => <IconBtn key={n} $w={9} aria-label={n}><Icon name={n} size={9} /></IconBtn>)}
                  <Toggle />
                </LayerBar>
                <LayerBar $h={20} $gap={5} $dim>
                  <Select label="Blend mode" value="Normal" w={78} dim />
                  <label htmlFor="op">Opacity:</label><Field id="op" $w={30} $dim defaultValue="100%" />
                </LayerBar>
                <LayerBar $h={19} $gap={5} $dim>
                  Lock:
                  {["checker", "brush", "move", "artboard", "lock"].map((n) => <IconBtn key={n} $w={9} aria-label={n}><Icon name={n} size={9} /></IconBtn>)}
                  <Group $ml={8} $gap={5}><label htmlFor="fl">Fill:</label><Field id="fl" $w={30} $dim defaultValue="100%" /></Group>
                </LayerBar>
                <Scroller>
                  <LayerList>
                    {layers.map((l) => (
                      <Layer key={l.name} $kind={l.kind}>
                        <EyeCell aria-label="visibility">{l.hidden ? <Blank /> : <Icon name="eye" size={8} />}</EyeCell>
                        {l.kind === "thumb" ? <Thumb /> : l.kind === "type" ? (
                          <Glyph><Icon name="type" size={10} /></Glyph>
                        ) : (
                          <Glyph $folder><Chevron /><Icon name="folder" size={10} /></Glyph>
                        )}
                        {l.name}
                      </Layer>
                    ))}
                  </LayerList>
                  <Track $gap={13} $thumb={66}><Chevron /><i /></Track>
                </Scroller>
                <LayerFoot>
                  <Icon name="linkH" size={9} /><em>fx</em>
                  {["maskSolid", "adjust", "folderSolid", "add", "trash"].map((n) => <IconBtn key={n} $w={9} aria-label={n}><Icon name={n} size={9} /></IconBtn>)}
                </LayerFoot>
              </LayersPanel>
            </Panels>
          </DockBody>
        </Dock>
      </Work>
      <Watermark>EKOGEA.<span>ORG</span></Watermark>
    </Shell>
  );
}
